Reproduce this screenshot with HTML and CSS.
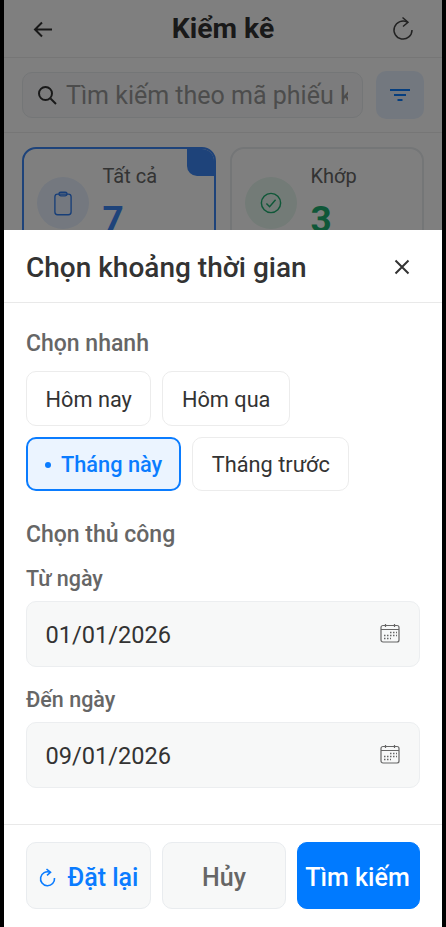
FILE: index.html
```html
<!DOCTYPE html>
<html lang="en">
<head>
  <meta charset="UTF-8" />
  <title>Kiểm kê</title>
  <link rel="stylesheet" href="styles.css">
</head>
<body>

<div class="app">
  <header class="top-bar">
    <svg class="top-icon" width="26" height="26" viewBox="0 0 26 26" fill="none" stroke="#333" stroke-width="2"><path d="M22 13.500H5M12 6.500l-7 7 7 7"/></svg>
    <h1>Kiểm kê</h1>
    <svg class="top-icon" width="26" height="26" viewBox="0 0 26 26" fill="none" stroke="#444" stroke-width="1.500"><path d="M17.500 6.300A9 9 0 1 0 22 14"/><path d="M12.500 1.500l5.500 4.800-5 4.200"/></svg>
  </header>

  <div class="search-row">
    <div class="search-box">
      <svg width="20" height="20" viewBox="0 0 20 20" fill="none" stroke="#333" stroke-width="2"><circle cx="8.500" cy="8.500" r="6.500"/><path d="M13.500 13.500 19 19"/></svg>
      <span class="search-text">Tìm kiếm theo mã phiếu kiểm kê</span>
    </div>
    <button class="filter-btn">
      <svg width="22" height="14" viewBox="0 0 22 14" fill="none" stroke="#0a7cff" stroke-width="2"><path d="M1 2h20M5 7h12M8.500 12h5"/></svg>
    </button>
  </div>

  <div class="cards">
    <div class="card card-active">
      <span class="card-corner"></span>
      <span class="card-icon">
        <svg width="18" height="25" viewBox="0 0 20 27" fill="none" stroke="#2f7cf0" stroke-width="1.500"><rect x="1" y="3" width="18" height="23" rx="3"/><rect x="5.500" y="1" width="9" height="4" rx="2"/></svg>
      </span>
      <div class="card-text">
        <div class="card-label">Tất cả</div>
        <div class="card-num num-blue">7</div>
      </div>
    </div>
    <div class="card">
      <span class="card-icon icon-green">
        <svg width="22" height="22" viewBox="0 0 24 24" fill="none" stroke="#1faf70" stroke-width="1.600"><circle cx="12" cy="12" r="10.500"/><path d="M7 12.500l3.500 3.500L17 8.500"/></svg>
      </span>
      <div class="card-text">
        <div class="card-label">Khớp</div>
        <div class="card-num num-green">3</div>
      </div>
    </div>
  </div>

  <div class="overlay"></div>

  <section class="sheet">
    <div class="sheet-head">
      <h2>Chọn khoảng thời gian</h2>
      <svg width="16" height="16" viewBox="0 0 16 16" fill="none" stroke="#333" stroke-width="2"><path d="M1.500 1.500l13 13M14.500 1.500l-13 13"/></svg>
    </div>

    <div class="sheet-body">
      <div class="section-title">Chọn nhanh</div>
      <div class="chips">
        <button class="chip">Hôm nay</button>
        <button class="chip">Hôm qua</button>
        <button class="chip chip-on"><span class="dot"></span>Tháng này</button>
        <button class="chip">Tháng trước</button>
      </div>

      <div class="section-title manual">Chọn thủ công</div>
      <div class="field-label">Từ ngày</div>
      <div class="date-field">
        <span>01/01/2026</span>
        <svg class="cal" width="20" height="20" viewBox="0 0 20 20" fill="none" stroke="#666" stroke-width="1.200"><rect x="1" y="2.500" width="18" height="16.500" rx="2"/><path d="M1 6.500h18M5.500 1v3M14.500 1v3"/><path stroke-width="1.500" stroke-dasharray="1.500 1.500" d="M10 9.500h7M4 12.500h13M4 15.500h7"/></svg>
      </div>
      <div class="field-label second">Đến ngày</div>
      <div class="date-field">
        <span>09/01/2026</span>
        <svg class="cal" width="20" height="20" viewBox="0 0 20 20" fill="none" stroke="#666" stroke-width="1.200"><rect x="1" y="2.500" width="18" height="16.500" rx="2"/><path d="M1 6.500h18M5.500 1v3M14.500 1v3"/><path stroke-width="1.500" stroke-dasharray="1.500 1.500" d="M10 9.500h7M4 12.500h13M4 15.500h7"/></svg>
      </div>
    </div>

    <div class="sheet-foot">
      <button class="foot-btn btn-reset">
        <svg width="17" height="19" viewBox="0 0 17 19" fill="none" stroke="#0a7cff" stroke-width="1.600"><path d="M11 4.200A7 7 0 1 0 15.500 10"/><path d="M7.500 1l4 3.300-3.500 3"/></svg>
        Đặt lại
      </button>
      <button class="foot-btn btn-cancel">Hủy</button>
      <button class="foot-btn btn-search">Tìm kiếm</button>
    </div>
  </section>
</div>

</body>
</html>
```
FILE: styles.css
```css
* {
  box-sizing: border-box;
}
body {
  margin: 0;
  background: #000;
  font-family: Roboto, "Liberation Sans", sans-serif;
}
button {
  font-family: inherit;
  cursor: pointer;
}
svg {
  flex-shrink: 0;
}
.app {
  position: relative;
  width: 438px;
  height: 927px;
  margin: 0 4px;
  background: #fff;
  overflow: hidden;
}

/* Page behind the sheet */
.top-bar {
  display: flex;
  align-items: center;
  justify-content: space-between;
  height: 58px;
  padding: 0 26px;
  border-bottom: 1px solid #ececec;
}
.top-bar h1 {
  margin: 0;
  font-size: 28.300px;
  font-weight: 700;
  color: #333;
}
.search-row {
  display: flex;
  align-items: center;
  gap: 13px;
  height: 75px;
  padding: 0 18px;
  border-bottom: 1px solid #ececec;
}
.search-box {
  display: flex;
  align-items: center;
  gap: 9px;
  flex: 1;
  min-width: 0;
  height: 46px;
  padding: 0 14px;
  background: #f8f9fa;
  border: 1px solid #e9ecef;
  border-radius: 10px;
}
.search-text {
  overflow: hidden;
  white-space: nowrap;
  font-size: 25px;
  color: #999;
}
.filter-btn {
  display: flex;
  align-items: center;
  justify-content: center;
  width: 48px;
  height: 48px;
  padding: 0;
  background: #e7f1ff;
  border: 0;
  border-radius: 10px;
}
.cards {
  display: grid;
  grid-template-columns: 194px 194px;
  gap: 14px;
  padding: 14px 18px;
}
.card {
  position: relative;
  display: flex;
  align-items: center;
  gap: 13.500px;
  height: 112px;
  padding: 0 13px;
  overflow: hidden;
  border: 2px solid #e9ecef;
  border-radius: 14px;
}
.card-active {
  border-color: #3d87f5;
}
.card-corner {
  position: absolute;
  top: 0;
  right: 0;
  width: 27px;
  height: 27px;
  background: #3d87f5;
  border-bottom-left-radius: 10px;
}
.card-icon {
  display: flex;
  align-items: center;
  justify-content: center;
  width: 52px;
  height: 52px;
  background: #e8f1ff;
  border-radius: 50%;
}
.icon-green {
  background: #e6f6ee;
}
.card-text {
  align-self: flex-start;
  margin-top: 16px;
}
.card-label {
  font-size: 20px;
  line-height: 23px;
  color: #666;
}
.card-num {
  margin-top: 10px;
  font-size: 37px;
  font-weight: 700;
}
.num-blue {
  color: #3d87f5;
}
.num-green {
  color: #1faf70;
}
.overlay {
  position: absolute;
  inset: 0;
  background: rgba(0, 0, 0, 0.5);
}

/* Date range sheet */
.sheet {
  position: absolute;
  left: 0;
  right: 0;
  top: 230px;
  bottom: 0;
  background: #fff;
}
.sheet-head {
  display: flex;
  align-items: center;
  justify-content: space-between;
  height: 73px;
  padding: 2px 32px 0 22px;
  border-bottom: 1px solid #e9e9e9;
}
.sheet-head h2 {
  margin: 0;
  font-size: 28px;
  font-weight: 500;
  color: #333;
}
.sheet-body {
  height: 521px;
  padding: 26px 22px 0;
}
.section-title {
  font-size: 23px;
  line-height: 30px;
  font-weight: 500;
  color: #666;
}
.manual {
  margin-top: 29px;
}
.chips {
  display: flex;
  flex-wrap: wrap;
  gap: 11px;
  margin-top: 12px;
}
.chip {
  display: flex;
  align-items: center;
  height: 54.500px;
  padding: 2px 18.500px 0;
  font-size: 21.760px;
  color: #333;
  background: #fff;
  border: 1.500px solid #ececec;
  border-radius: 10px;
}
.chip-on {
  padding: 2px 17px 0;
  font-weight: 500;
  color: #0a7cff;
  background: #ebf4ff;
  border: 2px solid #0a7cff;
}
.dot {
  width: 6px;
  height: 6px;
  margin-right: 10px;
  background: #0a7cff;
  border-radius: 50%;
}
.field-label {
  margin-top: 15px;
  font-size: 21.500px;
  line-height: 28px;
  font-weight: 500;
  color: #666;
}
.second {
  margin-top: 19.500px;
}
.date-field {
  display: flex;
  align-items: center;
  justify-content: space-between;
  height: 65.500px;
  margin-top: 8px;
  padding: 2px 19px 0 18.500px;
  font-size: 23.600px;
  color: #333;
  background: #f7f8f8;
  border: 1.500px solid #eceef0;
  border-radius: 10px;
}
.cal {
  margin-top: -3px;
}
.sheet-foot {
  display: grid;
  grid-template-columns: 125px 124px 123px;
  gap: 11px;
  height: 103px;
  padding: 17px 22px 0;
  border-top: 1.500px solid #e9e9e9;
}
.foot-btn {
  display: flex;
  align-items: center;
  justify-content: center;
  gap: 12px;
  height: 67px;
  padding: 3px 0 0;
  font-size: 25px;
  font-weight: 500;
  background: #f7f8f8;
  border: 1px solid #e9ecef;
  border-radius: 10px;
}
.btn-reset {
  color: #0a7cff;
}
.btn-cancel {
  color: #666;
}
.btn-search {
  padding-right: 2px;
  color: #fff;
  background: #007aff;
  border-color: #007aff;
}
```
